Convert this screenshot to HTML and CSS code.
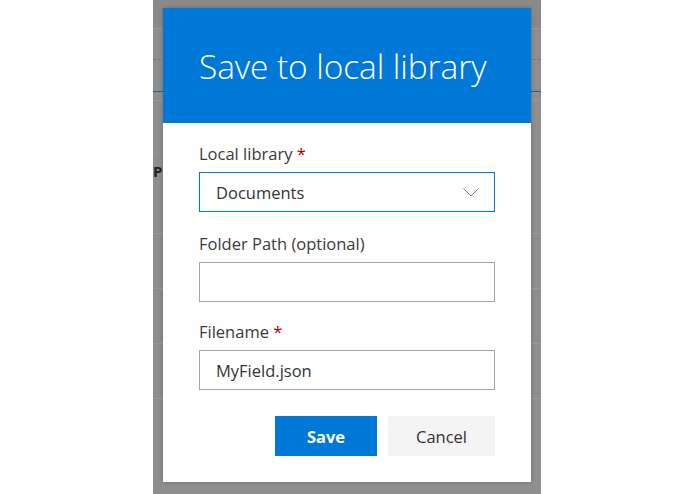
FILE: index.html
```html
<!DOCTYPE html>
<html lang="en">
<head>
    <meta charset="UTF-8">
    <title>Save to local library</title>
    <link rel="stylesheet" href="styles.css">
</head>
<body>
    <div class="page">
        <!-- faint rows of the page behind the overlay -->
        <div class="row row-top"></div>
        <div class="row row-dashed"></div>
        <div class="row row-blue"></div>
        <div class="row row-thin"></div>
        <div class="row row-head"></div>
        <div class="row row-title"><span class="peek">P</span></div>
        <div class="row row-item"></div>
        <div class="row row-item"></div>
        <div class="row row-item"></div>

        <div class="dialog">
            <div class="dialog-header">
                <h1 class="dialog-title">Save to local library</h1>
            </div>
            <div class="dialog-body">
                <div class="field">
                    <label class="field-label">Local library <span class="req">*</span></label>
                    <div class="select">
                        <span class="select-text">Documents</span>
                        <svg class="chevron" width="16" height="9" viewBox="0 0 16 9">
                            <polyline points="0.5,0.5 8,8 15.5,0.5" fill="none" stroke="#777" stroke-width="1"/>
                        </svg>
                    </div>
                </div>
                <div class="field">
                    <label class="field-label">Folder Path (optional)</label>
                    <div class="input"></div>
                </div>
                <div class="field field-filename">
                    <label class="field-label">Filename <span class="req">*</span></label>
                    <div class="input">MyField.json</div>
                </div>
                <div class="actions">
                    <button class="btn btn-primary">Save</button>
                    <button class="btn btn-default">Cancel</button>
                </div>
            </div>
        </div>
    </div>
</body>
</html>
```
FILE: styles.css
```css
:root{
    --brand-blue: #0078d7;
    --backdrop: #8e8e8e;
    --text-color: #3a3a3a;
    --font: "Open Sans", "Noto Sans", sans-serif;
}
html,body{
    margin: 0;
    padding: 0;
    background: #ffffff;
    font-family: var(--font);
}

/* ==============
    Backdrop page
    ============== */
.page{
    position: relative;
    width: 388px;
    height: 494px;
    margin-left: 153px;
    background-color: var(--backdrop);
    overflow: hidden;
}
.row{
    box-sizing: border-box;
    border-bottom: 1px solid #999999;
}
.row-top{ height: 29px; background-color: #8a8a8a; }
.row-dashed{ height: 31px; border-bottom: 1px dashed #777777; }
.row-blue{ height: 32px; border-bottom: 1px solid #1f5f97; }
.row-thin{ height: 9px; }
.row-head{ height: 53px; border-bottom-color: #939393; }
.row-title{ height: 80px; }
.row-item{ height: 55px; }
.peek{
    display: block;
    padding-top: 7px;
    font-weight: bold;
    font-size: 15px;
    color: #222222;
}

/* ==============
    Dialog
    ============== */
.dialog{
    position: absolute; /* sits over the page */
    top: 8px;
    left: 10px;
    width: 368px;
    background: #ffffff;
    box-shadow: 0 0 4px rgba(0,0,0,0.25);
}
.dialog-header{
    background-color: var(--brand-blue);
    height: 115px;
    box-sizing: border-box;
    padding: 38px 36px 0;
}
.dialog-title{
    margin: 0;
    color: #ffffff;
    font-weight: 300;
    font-size: 33.5px;
    line-height: 40px;
    letter-spacing: -0.1px;
}
.dialog-body{
    padding: 20px 36px 26px;
}

.field + .field{
    margin-top: 21px;
}
.field + .field-filename{
    margin-top: 19px;
}
.field-label{
    display: block;
    font-size: 16.5px;
    line-height: 22px;
    margin-bottom: 7px;
    color: var(--text-color);
}
.req{
    color: #a80000;
}
.select, .input{
    box-sizing: border-box;
    height: 40px;
    border: 1px solid #a6a6a6;
    padding: 0 16px;
    display: flex;
    align-items: center;
    font-size: 16.5px;
    color: #333333;
}
.select{
    border-color: var(--brand-blue);
    justify-content: space-between;
    padding-right: 15px;
}

/* ==============
    Buttons
    ============== */
.actions{
    display: flex;
    justify-content: flex-end;
    gap: 11px;
    margin-top: 26px;
}
.btn{
    height: 40px;
    border: none;
    font-family: var(--font);
    font-size: 16.5px;
    padding: 0;
}
.btn-primary{
    width: 102px;
    background-color: var(--brand-blue);
    color: #ffffff;
    font-weight: bold;
}
.btn-default{
    width: 107px;
    background-color: #f4f4f4;
    color: #333333;
}
```
